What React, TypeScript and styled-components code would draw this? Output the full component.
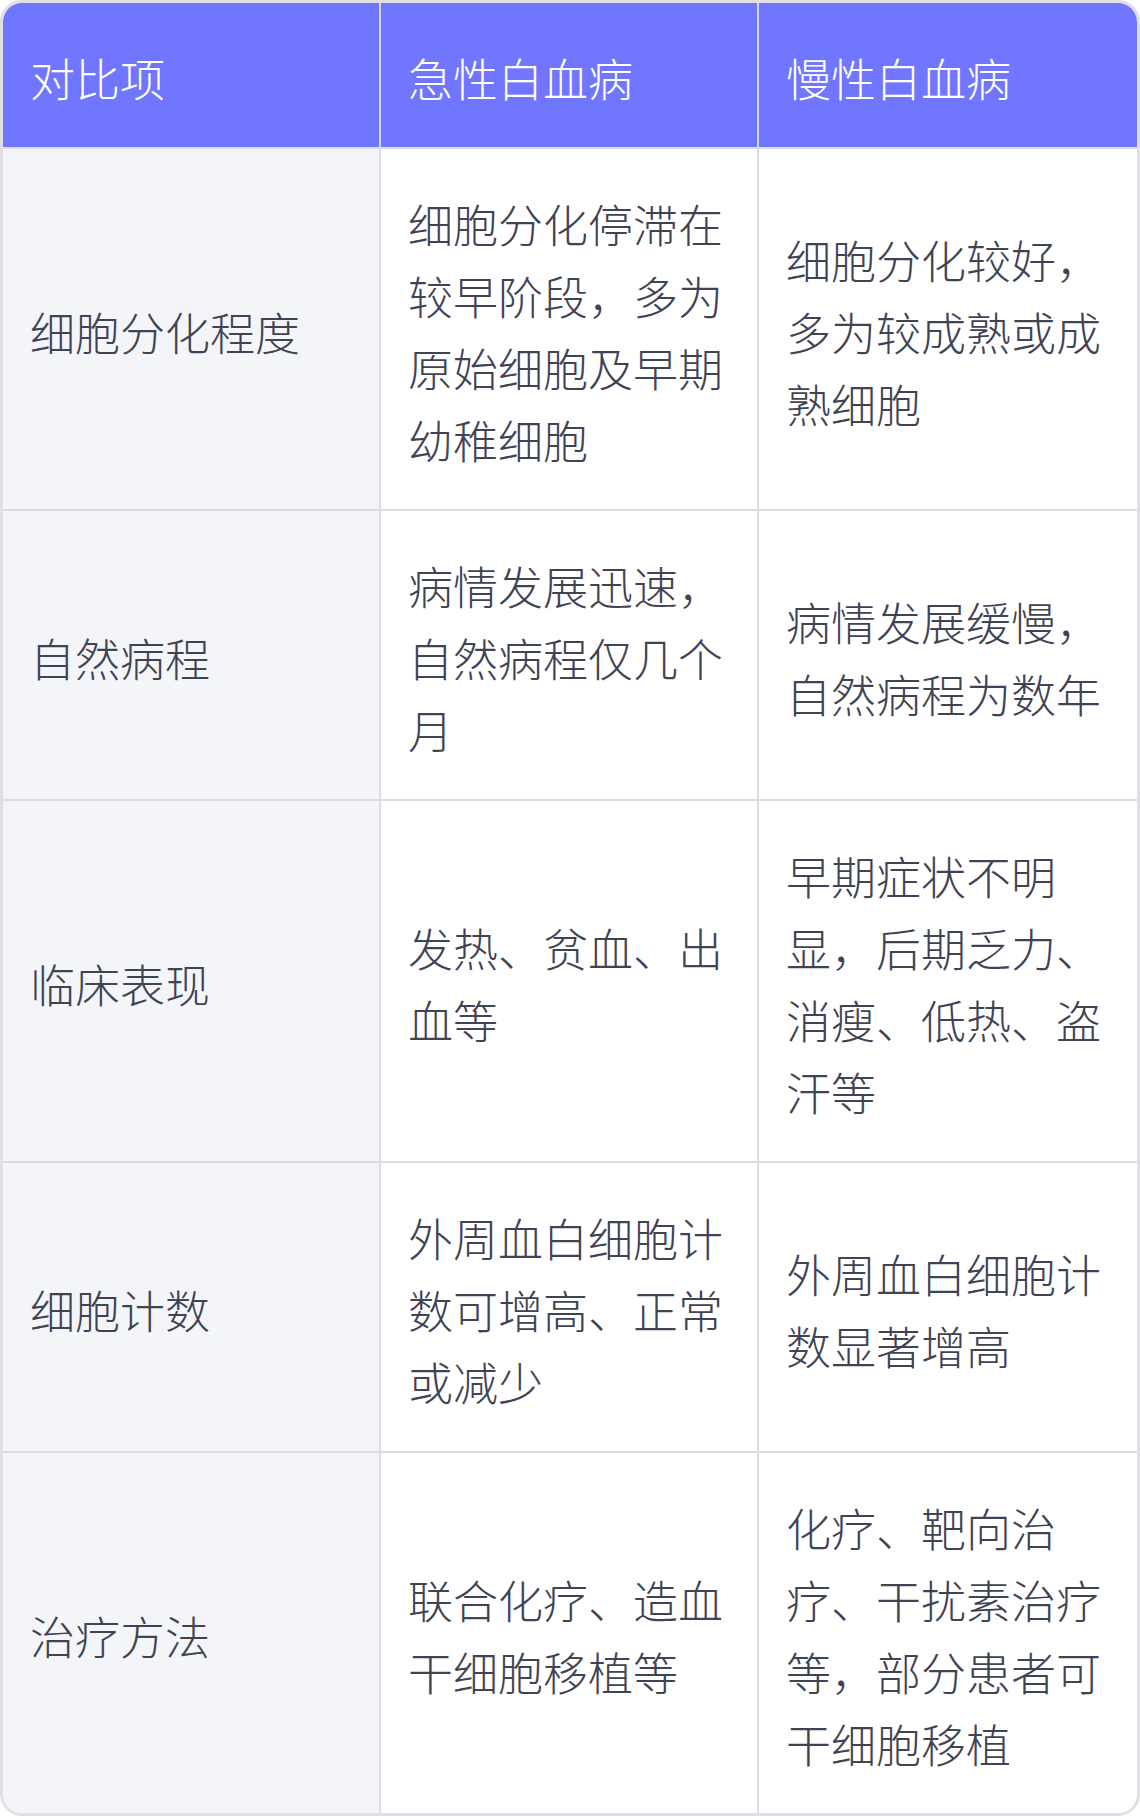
import React from "react";
import styled, { createGlobalStyle } from "styled-components";

const GlobalStyle = createGlobalStyle`
  html, body {
    margin: 0;
    padding: 0;
    background: #ffffff;
  }
  body {
    font-family: "Noto Sans CJK SC", "Noto Sans", sans-serif;
  }
`;

const TableWrapper = styled.div`
  width: 1140px;
  box-sizing: border-box;
  border: 3px solid #e0e0e4;
  border-radius: 22px;
  overflow: hidden;
  display: grid;
  grid-template-columns: repeat(3, 1fr);
  background: #ffffff;
`;

const Cell = styled.div<{ $head?: boolean; $label?: boolean; $lastCol?: boolean; $lastRow?: boolean }>`
  display: flex;
  align-items: center;
  box-sizing: border-box;
  padding: 39px 28px 33px 27px;
  font-size: 45px;
  line-height: 72px;
  font-weight: 300;
  color: ${(p) => (p.$head ? "#ffffff" : "#3f4353")};
  background: ${(p) => (p.$head ? "#7176ff" : p.$label ? "#f4f5f9" : "#ffffff")};
  border-right: ${(p) => (p.$lastCol ? "none" : p.$head ? "2px solid #d4d6f2" : "2px solid #dcdde3")};
  border-bottom: ${(p) => (p.$lastRow ? "none" : "2px solid #dcdde3")};
  word-break: break-all;
`;

const headers = ["对比项", "急性白血病", "慢性白血病"];

const rows: string[][] = [
  ["细胞分化程度", "细胞分化停滞在较早阶段，多为原始细胞及早期幼稚细胞", "细胞分化较好，多为较成熟或成熟细胞"],
  ["自然病程", "病情发展迅速，自然病程仅几个月", "病情发展缓慢，自然病程为数年"],
  ["临床表现", "发热、贫血、出血等", "早期症状不明显，后期乏力、消瘦、低热、盗汗等"],
  ["细胞计数", "外周血白细胞计数可增高、正常或减少", "外周血白细胞计数显著增高"],
  ["治疗方法", "联合化疗、造血干细胞移植等", "化疗、靶向治疗、干扰素治疗等，部分患者可干细胞移植"],
];

const App: React.FunctionComponent = () => {
  return (
    <>
      <GlobalStyle />
      <TableWrapper>
        {headers.map((h, i) => (
          <Cell key={h} $head $lastCol={i === 2}>
            {h}
          </Cell>
        ))}
        {rows.map((row, r) =>
          row.map((text, c) => (
            <Cell
              key={`${r}-${c}`}
              $label={c === 0}
              $lastCol={c === 2}
              $lastRow={r === rows.length - 1}
            >
              {text}
            </Cell>
          ))
        )}
      </TableWrapper>
    </>
  );
};

export default App;
